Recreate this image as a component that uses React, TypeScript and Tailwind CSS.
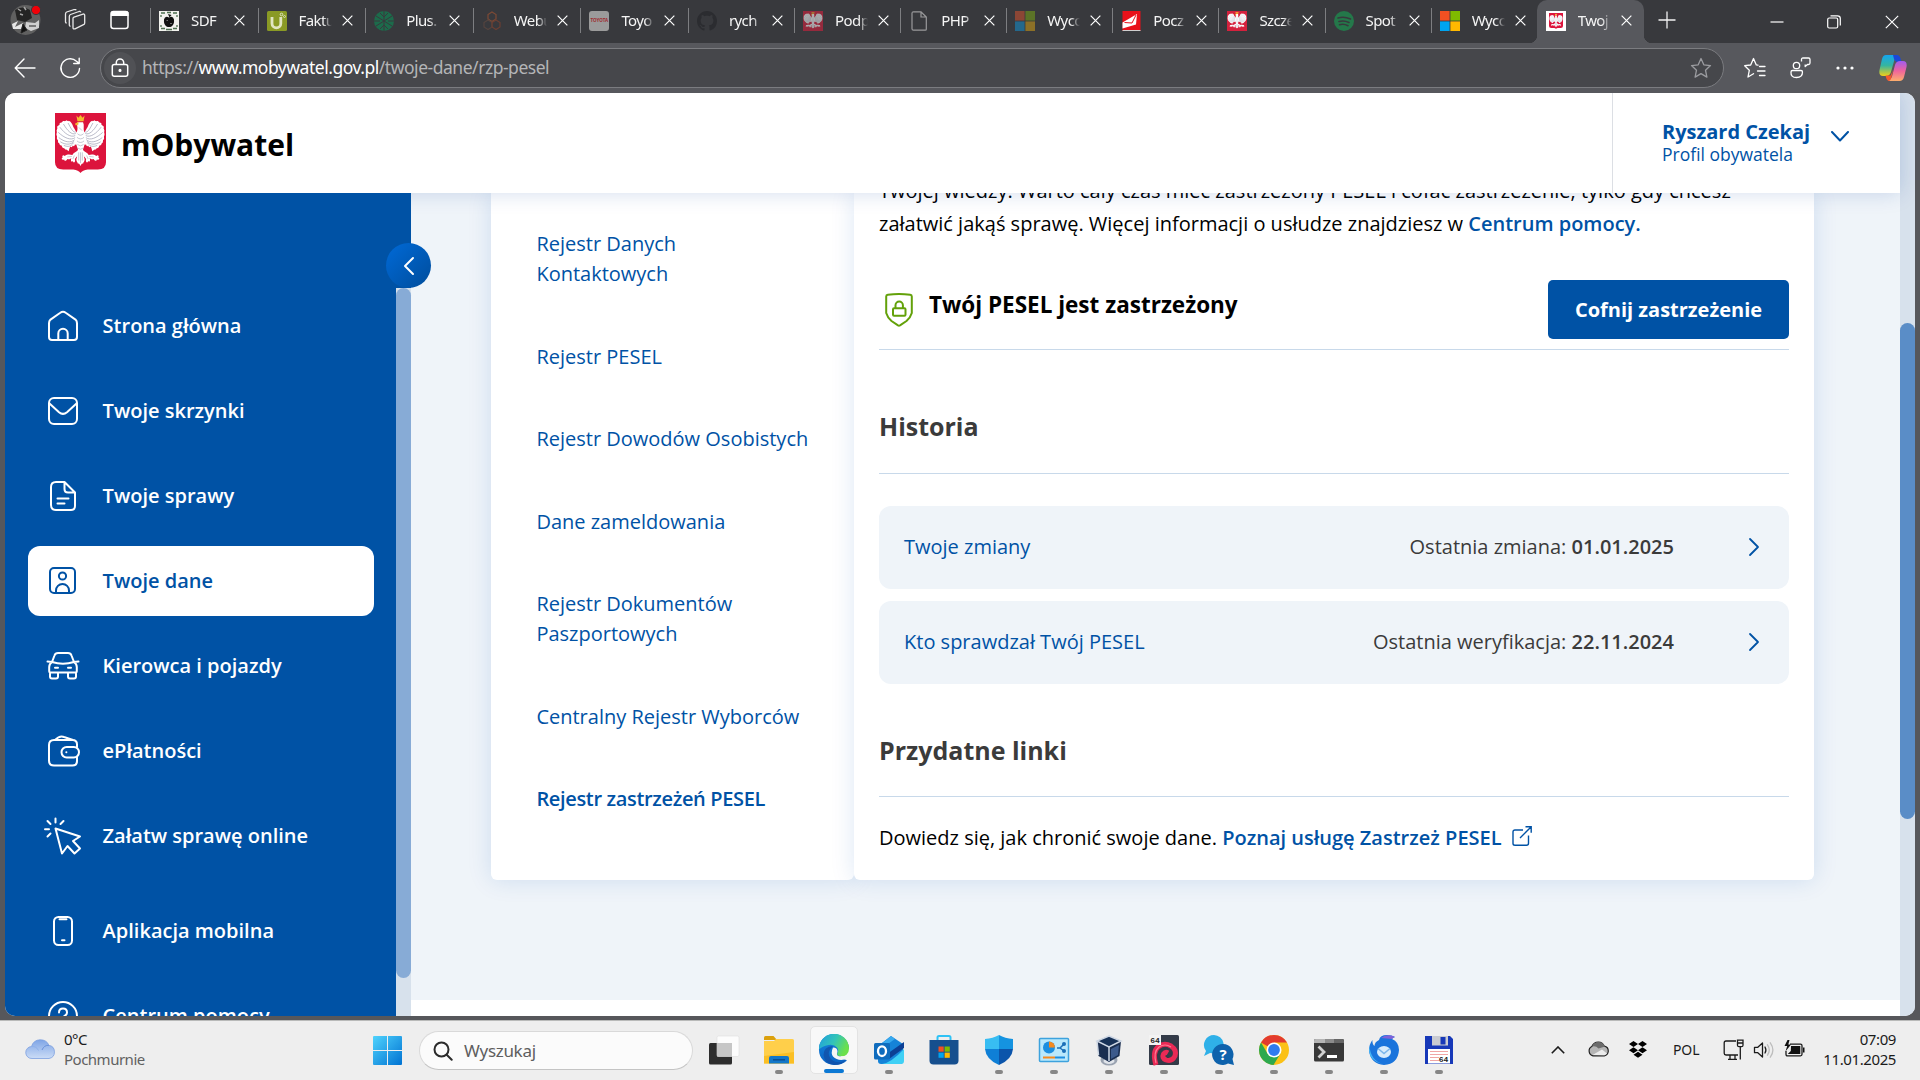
import React from "react";

const UI = "font-['Open_Sans',sans-serif]";
const SYS = "font-['Noto_Sans','Open_Sans',sans-serif]";

/* ---------- emblem ---------- */

function EagleHalf() {
  return (
    <g>
      <path
        d="M46 40 C41 38 39 31 36 27 C34 21 31 16 27 15 C26 17 24 15 22 14 C21 17 18 15 15 16 C15 19 11 18 9 20 C10 24 6 24 4 27 C6 30 3 32 3 35 C5 37 2 40 3 43 C5 44 3 48 4 51 C7 51 5 55 7 58 C9 57 8 61 11 63 C13 61 13 66 16 68 C18 66 19 70 21 71 C22 69 25 73 27 74 C28 69 29 66 31 65 C33 68 34 65 35 63 C37 66 39 63 39 61 C42 62 44 60 46 58 Z"
        fill="#fff"
      />
      <g stroke="#8f90a6" strokeWidth="1.2" fill="none" strokeLinecap="round">
        <path d="M40 37 C35 38 31 29 26 20" />
        <path d="M40 40 C33 43 24 34 17 22" />
        <path d="M39 44 C31 48 19 40 10 28" />
        <path d="M39 48 C31 54 18 48 7 38" />
        <path d="M38 52 C31 59 18 56 8 48" />
        <path d="M37 55 C31 62 21 62 11 56" />
        <path d="M36 58 C31 65 26 66 18 63" />
      </g>
      <path
        d="M45 72 C41 76 36 77 34 81 C30 80 24 79 19 83 C16 80 13 83 15 86 C11 88 14 92 18 90 C18 94 23 93 24 89 C28 90 30 89 32 87 C30 92 32 96 35 93 C36 98 41 95 39 89 C42 85 45 82 47 79 Z"
        fill="#fff"
      />
      <path d="M24 85 L33 84 M35 89 L38 82" stroke="#a9a9b8" strokeWidth="1.1" />
    </g>
  );
}

function Emblem({ className, square = false }: { className: string; square?: boolean }) {
  return (
    <svg viewBox="0 0 100 116" preserveAspectRatio="none" className={className}>
      {square ? (
        <rect width="100" height="116" fill="#d4213d" />
      ) : (
        <path d="M0 0 H100 V95 Q100 109 84 109 H64 Q54 110 50 116 Q46 110 36 109 H16 Q0 109 0 95 Z" fill="#dc143c" />
      )}
      <EagleHalf />
      <g transform="translate(100 0) scale(-1 1)">
        <EagleHalf />
      </g>
      <path d="M44 18 C42 25 46 29 43 36 C39 44 40 60 45 70 L43 86 C40 92 44 94 45 98 C48 97 49 101 50 103 C51 101 52 97 55 98 C56 94 60 92 57 86 L55 70 C60 60 61 44 57 36 C55 30 58 24 55 18 Z" fill="#fff" />
      <g stroke="#9c9db0" strokeWidth="1.1" fill="none">
        <path d="M44 40 Q50 46 56 40 M43 47 Q50 53 57 47 M43 54 Q50 60 57 54 M44 61 Q50 66 56 61 M45 68 Q50 72 55 68 M46.500 76 V92 M50 76 V97 M53.500 76 V92 M47 28 L53 34" />
      </g>
      <path d="M42 5 L46 9 L50 4 L54 9 L58 5 L56 16 H44 Z" fill="#f5b82e" />
      <path d="M46 17 L39 21 L41 24 L46 22 Z" fill="#f5b82e" />
    </svg>
  );
}

/* ---------- tab favicons ---------- */

const MsSquares = ({ dim = false }: { dim?: boolean }) => (
  <svg viewBox="0 0 20 20" className="size-5">
    <rect width="9.6" height="9.6" fill={dim ? "#8b4635" : "#f25022"} />
    <rect x="10.4" width="9.6" height="9.6" fill={dim ? "#5b7327" : "#7fba00"} />
    <rect y="10.4" width="9.6" height="9.6" fill={dim ? "#24688c" : "#00a4ef"} />
    <rect x="10.4" y="10.4" width="9.6" height="9.6" fill={dim ? "#8c7027" : "#ffb900"} />
  </svg>
);

const Favicon = {
  sdf: (
    <svg viewBox="0 0 20 20" className="size-5">
      <rect width="20" height="20" fill="#f2f2ee" />
      <path d="M2 2h4M8 1.5h4M14 2h4M2 17.5h4M7 18.5h6M14 17.5h4M2 4v2M18 4v2M2 14v2M18 14v2" stroke="#4d7050" strokeWidth="1.3" />
      <path d="M10 6.500q4-2 5 2 .5 5-2.500 7-2.500 1-5 0-3-2-2.500-7 1-4 5-2z" fill="#111" />
      <path d="M9 3l3.500 1-2 2.500" fill="#111" />
      <path d="M7.500 9.500h1.500M11 12.500h2" stroke="#999" strokeWidth=".7" />
    </svg>
  ),
  fakt: (
    <svg viewBox="0 0 20 20" className="size-5">
      <rect width="20" height="20" rx="1.500" fill="#8a9a25" />
      <path d="M5 6v6.500a4.400 4.400 0 0 0 8.800 0V6" fill="none" stroke="#e1e5c3" strokeWidth="2.800" />
      <circle cx="14.500" cy="3.500" r="1.300" fill="none" stroke="#e1e5c3" />
      <circle cx="17.500" cy="5.500" r="1" fill="none" stroke="#e1e5c3" strokeWidth=".8" />
    </svg>
  ),
  plus: (
    <svg viewBox="0 0 20 20" className="size-5">
      <circle cx="10" cy="10" r="10" fill="#1c6b4b" />
      <path d="M10 0v20M2 5l8 5 8-5M2 15l8-5 8 5M6 2l4 4 4-4M6 18l4-4 4 4M0 10h6M14 10h6" stroke="#38393d" strokeWidth="1" fill="none" />
    </svg>
  ),
  web: (
    <svg viewBox="0 0 20 20" className="size-5" fill="none" strokeWidth="1.200">
      <path d="M10 1l4 2.500v4.500l-4 2.500-4-2.500V3.500z" stroke="#7d4a35" />
      <path d="M6 9l4 2.500V16l-4 2.500L2 16v-4.500z" stroke="#54443f" />
      <path d="M14 9l4 2.500V16l-4 2.500-4-2.500v-4.500z" stroke="#6b3f33" />
    </svg>
  ),
  toyo: (
    <div className="flex size-5 items-center justify-center rounded-[3px] bg-[#9b9b9b] text-[4.5px] font-bold text-[#9e2a30]">TOYOTA</div>
  ),
  github: (
    <svg viewBox="0 0 16 16" className="size-5" fill="#2b2c30">
      <path d="M8 0C3.580 0 0 3.580 0 8c0 3.540 2.290 6.530 5.470 7.590.4.070.55-.17.55-.38 0-.19-.01-.82-.01-1.490-2.010.37-2.530-.49-2.690-.94-.09-.23-.48-.94-.82-1.130-.28-.15-.68-.52-.01-.53.63-.01 1.080.58 1.230.82.72 1.210 1.870.87 2.330.66.07-.52.28-.87.51-1.070-1.780-.2-3.640-.89-3.640-3.950 0-.87.31-1.590.82-2.150-.08-.2-.36-1.020.08-2.120 0 0 .67-.21 2.200.82.64-.18 1.320-.27 2-.27s1.360.09 2 .27c1.530-1.040 2.200-.82 2.200-.82.44 1.100.16 1.920.08 2.120.51.56.82 1.270.82 2.150 0 3.070-1.870 3.750-3.650 3.950.29.25.54.73.54 1.480 0 1.070-.01 1.930-.01 2.200 0 .21.15.46.55.38A8.010 8.010 0 0 0 16 8c0-4.420-3.580-8-8-8" />
    </svg>
  ),
  eagleDim: (
    <div className="size-5 opacity-60">
      <Emblem square className="size-5" />
    </div>
  ),
  page: (
    <svg viewBox="0 0 20 20" className="size-5" fill="none" stroke="#9a9a9c" strokeWidth="1.200">
      <path d="M4.500.8H12L17.300 6v12.200q0 1-1 1H4.500q-1.500 0-1.500-1.500V2.300Q3 .8 4.500.8ZM12 .8V6h5.300" />
    </svg>
  ),
  msDim: <MsSquares dim />,
  pocz: (
    <svg viewBox="0 0 20 20" className="size-5">
      <rect x="1.500" width="18" height="20" fill="#e8111a" />
      <path d="M1.500 11.500L16 3l-1 10.500-13.500 4z" fill="#fff" />
      <path d="M3.500 11.500l7.500.5 4-8" fill="none" stroke="#e8111a" />
      <path d="M1.500 19.500h18" stroke="#cfcfcf" />
    </svg>
  ),
  eagle: <Emblem square className="size-5" />,
  spot: (
    <svg viewBox="0 0 20 20" className="size-5">
      <circle cx="10" cy="10" r="10" fill="#24784a" />
      <path d="M4 7q6-2 12.500 1M5 10.500q5-1.500 10 1M5.500 13.700q4.500-1.200 8.500 1" fill="none" stroke="#38393d" strokeWidth="1.600" strokeLinecap="round" />
    </svg>
  ),
  ms: <MsSquares />,
};

const tabs: { label: string; icon: React.ReactNode; wide?: boolean }[] = [
  { label: "SDF", icon: Favicon.sdf, wide: true },
  { label: "Faktu", icon: Favicon.fakt, wide: true },
  { label: "Plus.", icon: Favicon.plus, wide: true },
  { label: "Webu", icon: Favicon.web, wide: true },
  { label: "Toyo", icon: Favicon.toyo, wide: true },
  { label: "rych", icon: Favicon.github },
  { label: "Podp", icon: Favicon.eagleDim },
  { label: "PHP", icon: Favicon.page },
  { label: "Wyco", icon: Favicon.msDim },
  { label: "Pocz", icon: Favicon.pocz },
  { label: "Szcze", icon: Favicon.eagle },
  { label: "Spot", icon: Favicon.spot },
  { label: "Wyco", icon: Favicon.ms },
];

const Cross = ({ s = 12, w = 1.3 }: { s?: number; w?: number }) => (
  <svg width={s} height={s} viewBox="0 0 12 12" className="shrink-0">
    <path d="M.7.7l10.600 10.600M11.300.7L.7 11.300" stroke="#fff" strokeWidth={w} fill="none" />
  </svg>
);

function TabBody({ label, icon, sep = true }: { label: string; icon: React.ReactNode; sep?: boolean }) {
  return (
    <>
      <span className={sep ? "h-[25px] w-px bg-[#7d7e81]" : "h-[25px] w-px"} />
      <span className="ml-2 flex size-5 shrink-0">{icon}</span>
      <span className="mt-[-2px] ml-3 w-[33px] shrink-0 text-[15px] leading-5 tracking-[-0.6px] whitespace-nowrap text-[#f5f5f5] [mask-image:linear-gradient(to_right,#000_72%,transparent)]">
        {label}
      </span>
      <span className="ml-[10px] flex">
        <Cross s={11} />
      </span>
    </>
  );
}

function TabStrip() {
  return (
    <div className="flex h-[43px] bg-[#38393d]">
      <div className="flex w-[150px] shrink-0 items-center pb-[3px]">
        <svg viewBox="0 0 32 32" className="ml-[9px] size-8">
          <circle cx="16.500" cy="16" r="15" fill="#606060" />
          <path d="M6 6q8-5 15 0l2 8-7 4-8-2z" fill="#242424" />
          <path d="M9 5l3 2M15 3l2 3M11 10l3 1" stroke="#a5a5a5" strokeWidth="1.500" />
          <path d="M3 20l6-3-3 6 8-4-2 6H4z" fill="#e6e6e6" />
          <path d="M17 18l9 1 4-3v8l-8 3-6-3z" fill="#cfcfcf" />
          <path d="M14 20l4 6-6 3zM20 22h7" fill="#111" stroke="#222" />
          <circle cx="27" cy="6" r="4.600" fill="#f00008" stroke="#38393d" />
        </svg>
        <svg viewBox="0 0 22 22" className="ml-[23px] size-[22px]" fill="none" stroke="#e8e8e8" strokeWidth="1.300" strokeLinejoin="round">
          <path d="M9 9.500q0-1 1-1.400l9-3q1.700-.4 1.700 1.200V14q0 1.200-1.200 1.700L11 19.800q-2 .6-2-1z" />
          <path d="M5.300 16V7.500Q5.300 6 6.500 5.500l8.500-3q1.500-.4 1.800.8M1.500 13V5Q1.500 3.600 2.700 3l7.800-2.500q1.300-.3 1.600.7" />
          <path d="M1.500 13q0 1 1.200 1.200M5.300 16q0 1 1.200 1.300" />
        </svg>
        <svg viewBox="0 0 20 20" className="ml-[24px] size-5">
          <rect x="1" y="1.600" width="17" height="16.800" rx="2.500" fill="none" stroke="#fff" strokeWidth="1.500" />
          <path d="M1 2.500Q1.500 1 3 1h13.500Q18 1 18.500 2.500V6H1z" fill="#fff" />
        </svg>
      </div>
      {tabs.map((t, i) => (
        <div key={i} className={t.wide ? "flex w-[107.6px] shrink-0 items-center pb-[2px]" : "flex w-[106.1px] shrink-0 items-center pb-[2px]"}>
          <TabBody label={t.label} icon={t.icon} />
        </div>
      ))}
      <div className="relative flex h-[43px] w-[107px] shrink-0 items-center rounded-t-[10px] bg-[#57585d] pb-[2px]">
        <TabBody
          sep={false}
          label="Twoj"
          icon={
            <span className="flex size-5 items-center justify-center bg-white">
              <Emblem className="h-4 w-[14px]" />
            </span>
          }
        />
        <span className="absolute bottom-0 -left-2 size-2 bg-[radial-gradient(circle_at_0_0,#38393d_8px,#57585d_8.5px)]" />
        <span className="absolute -right-2 bottom-0 size-2 bg-[radial-gradient(circle_at_100%_0,#38393d_8px,#57585d_8.5px)]" />
      </div>
      <div className="flex flex-1 items-center pb-1">
        <svg viewBox="0 0 18 18" className="ml-[14px] size-[18px]" stroke="#f2f2f2" strokeWidth="1.300">
          <path d="M9 .5v17M.5 9h17" />
        </svg>
        <svg viewBox="0 0 14 14" className="mt-[5px] ml-[94px] size-[14px]" stroke="#fff" strokeWidth="1.200">
          <path d="M.5 7h13" />
        </svg>
        <svg viewBox="0 0 14 14" className="mt-[5px] ml-[43px] size-[14px]" fill="none" stroke="#fff" strokeWidth="1.200">
          <rect x=".7" y="3" width="10" height="10" rx="1.500" />
          <path d="M3.500.8h7Q13.300.8 13.300 3.500V10.500" />
        </svg>
        <span className="mt-[5px] ml-[44px] flex">
          <Cross s={14} w={1} />
        </span>
      </div>
    </div>
  );
}

function Toolbar() {
  return (
    <div className="flex h-[50px] items-start bg-[#57585d] pt-[5px]">
      <svg viewBox="0 0 22 22" className="mt-[9px] ml-[14px] size-[22px]" fill="none" stroke="#fff" strokeWidth="1.400" strokeLinecap="round" strokeLinejoin="round">
        <path d="M21 11H1.500M10 2L1.200 11l8.800 9" />
      </svg>
      <svg viewBox="0 0 22 22" className="mt-[9px] ml-[23px] size-[22px]" fill="none" stroke="#fff" strokeWidth="1.400" strokeLinecap="round" strokeLinejoin="round">
        <path d="M20.500 11.500a9.300 9.300 0 1 1-3-7.300L20 6.300M20.200 1.300v5.200h-5.500" />
      </svg>
      <div className="ml-[19px] flex h-10 w-[1624px] items-center rounded-full border border-[#7b7c80] bg-[#46474b]">
        <span className="ml-[3px] flex size-8 items-center justify-center rounded-full bg-[#505155]">
          <svg viewBox="0 0 18 20" className="h-5 w-[18px]" fill="none" stroke="#fff" strokeWidth="1.500">
            <rect x="1.300" y="6.500" width="15.400" height="11.800" rx="2" />
            <path d="M5.300 6.500V4.600a3.700 3.700 0 0 1 7.400 0v1.900" />
            <circle cx="9" cy="12.400" r=".8" fill="#fff" />
          </svg>
        </span>
        <span className="-mt-[3px] ml-[6px] text-[17.500px] leading-6 tracking-[-0.47px] whitespace-nowrap text-[#b4b5b7]">
          https://<span className="text-white">www.mobywatel.gov.pl</span>/twoje-dane/rzp-pesel
        </span>
        <svg viewBox="0 0 22 22" className="mr-[11px] ml-auto size-[22px]" fill="none" stroke="#9b9ca0" strokeWidth="1.300" strokeLinejoin="round">
          <path d="M11 1.500l2.800 6.300 6.700.8-5 4.600 1.400 6.900-5.900-3.500-5.900 3.500 1.400-6.900-5-4.600 6.700-.8z" />
        </svg>
      </div>
      <svg viewBox="0 0 22 22" className="mt-[9px] ml-[20px] size-[22px]" fill="none" stroke="#fff" strokeWidth="1.300" strokeLinejoin="round" strokeLinecap="round">
        <path d="M14 8.200l-1.700-.3L9.500 1.500 6.700 8l-6 .7 4.600 4.600L4 20l5.500-3.300M15.500 9.500H21M13.500 14H21M15.500 18.500H21" />
      </svg>
      <svg viewBox="0 0 22 22" className="mt-[9px] ml-[23px] size-[22px]" fill="none" stroke="#fff" strokeWidth="1.300" strokeLinejoin="round">
        <circle cx="7.500" cy="8.500" r="3.200" />
        <path d="M3.500 13.500h8.500q1.500 0 1.500 1.500 0 5.500-6 5.500t-5.500-5.500q0-1.500 1.500-1.500zM12.500 4.500V2.500Q12.500 1 14 1h5.500Q21 1 21 2.500V6q0 1.500-1.500 1.500h-1l-2.300 2V7.400" />
      </svg>
      <svg viewBox="0 0 18 4" className="mt-[18px] ml-[25px] h-1 w-[18px]" fill="#fff">
        <circle cx="2" cy="2" r="1.600" />
        <circle cx="9" cy="2" r="1.600" />
        <circle cx="16" cy="2" r="1.600" />
      </svg>
      <svg viewBox="0 0 28 28" className="mt-[6px] ml-[25px] size-7">
        <defs>
          <linearGradient id="cpA" x1="0" y1="0" x2="0" y2="1">
            <stop offset="0" stopColor="#14a5f0" />
            <stop offset=".5" stopColor="#35b5a0" />
            <stop offset="1" stopColor="#f0cf18" />
          </linearGradient>
          <linearGradient id="cpB" x1="0" y1="0" x2="0" y2="1">
            <stop offset="0" stopColor="#a05cf0" />
            <stop offset=".5" stopColor="#f0649c" />
            <stop offset="1" stopColor="#fdae6c" />
          </linearGradient>
        </defs>
        <path d="M7 1h12q-2.500 1-3.500 4.500L12 18q-1.200 4-5 4H4q-4.500 0-3.500-6L3 5q1-4 4-4z" fill="url(#cpA)" />
        <path d="M14 1h4q2.500 0 3.500 3.500L22.500 8H18q-2 0-3-3z" fill="#1b48d8" />
        <path d="M21 7h3q4.500 0 3.500 6L25 23q-1 4-4.500 4H9q3-1 4-4.500L16 11q1.200-4 5-4z" fill="url(#cpB)" />
        <path d="M6.500 21.500h5L14 16l-1.500 7Q11.500 27 9.500 27 7.500 26 6.500 21.500z" fill="#f4572e" />
      </svg>
    </div>
  );
}

/* ---------- sidebar ---------- */

const ic = "size-[38px] shrink-0 fill-none stroke-current stroke-2 [stroke-linecap:round] [stroke-linejoin:round]";

const SideIcon = {
  home: (
    <svg viewBox="0 0 38 38" className={ic}>
      <path d="M5 16.200Q5 14 6.500 12.600L16.300 5.800Q19 3.800 21.700 5.800L31.500 12.600Q33 14 33 16.200V30Q33 33 30 33H8Q5 33 5 30zM14.300 33v-6.500a4.700 4.700 0 0 1 9.400 0V33" />
    </svg>
  ),
  mail: (
    <svg viewBox="0 0 38 38" className={ic}>
      <rect x="5" y="6" width="28" height="26" rx="5" />
      <path d="M5.500 11.500L15 20.200Q19 23.600 23 20.200l9.500-8.700" />
    </svg>
  ),
  doc: (
    <svg viewBox="0 0 38 38" className={ic}>
      <path d="M12 5h8.500L31 15.500V29q0 4-4 4H12q-5 0-5-5V10q0-5 5-5zM20.500 5v7q0 3.500 3.500 3.500h7M13.500 21.500h11M13.500 26.500h7" />
    </svg>
  ),
  user: (
    <svg viewBox="0 0 38 38" className={ic}>
      <rect x="6" y="6" width="25" height="25" rx="4" />
      <circle cx="18.500" cy="14" r="3.600" />
      <path d="M12 31v-2.500a6.500 6.500 0 0 1 13 0V31" />
    </svg>
  ),
  car: (
    <svg viewBox="0 0 38 38" className={ic}>
      <path d="M8 15L10.500 8.500Q11.300 6 14 6h10q2.700 0 3.500 2.500L30 15M3.500 14.500L8 15q11 3.500 22 0l4.500-.5M8 15q-2.800 2-2.800 5v4q0 1.500 1.500 1.500h24.600q1.500 0 1.500-1.500v-4q0-3-2.800-5M11 20.800h3M24 20.800h3M6 25.500v4q0 2 2 2h4q2 0 2-2v-4M24 25.500v4q0 2 2 2h4q2 0 2-2v-4" />
    </svg>
  ),
  wallet: (
    <svg viewBox="0 0 38 38" className={ic}>
      <path d="M33 15v-2.500Q33 8 28.500 8H10q-5 0-5 5v15.500Q5 33.500 10 33.500h18.500Q33 33.500 33 29v-3.500M11 8q5-5 9-3l9 3" />
      <rect x="17.500" y="15" width="17.500" height="10.500" rx="5.200" />
      <path d="M22.300 20.200h.1" />
    </svg>
  ),
  click: (
    <svg viewBox="0 0 38 38" className={ic}>
      <path d="M11.500 11.500l6.500 25 5.500-7.500 7 7.500 5.500-5-7-7.500 7-4.500zM11.500 1.500v4M3.500 4l3 3M19.500 4l-3 3M1 12.200h4M3.500 19.500l3-3" />
    </svg>
  ),
  phone: (
    <svg viewBox="0 0 38 38" className={ic}>
      <rect x="10" y="5" width="18" height="28" rx="4.500" />
      <path d="M15.500 7.200h7M18 28.200h2.500" />
    </svg>
  ),
  help: (
    <svg viewBox="0 0 38 38" className={ic}>
      <circle cx="19" cy="19" r="14" />
      <path d="M15 15.500q0-4 4-4t4 4q0 2-2 3.200-2 1.300-2 3.300M19 26h.1" />
    </svg>
  ),
};

const sideItems = [
  { label: "Strona główna", icon: SideIcon.home },
  { label: "Twoje skrzynki", icon: SideIcon.mail },
  { label: "Twoje sprawy", icon: SideIcon.doc },
  { label: "Twoje dane", icon: SideIcon.user, active: true },
  { label: "Kierowca i pojazdy", icon: SideIcon.car },
  { label: "ePłatności", icon: SideIcon.wallet },
  { label: "Załatw sprawę online", icon: SideIcon.click },
  { label: "Aplikacja mobilna", icon: SideIcon.phone, spaced: true },
  { label: "Centrum pomocy", icon: SideIcon.help },
];

function Sidebar() {
  return (
    <aside className="relative z-20 flex w-[406px] shrink-0 bg-[#0052a5]">
      <nav className="flex w-[391px] flex-col gap-[15px] overflow-hidden pt-[98px] pl-[23px]">
        {sideItems.map((it) => (
          <div
            key={it.label}
            className={
              (it.active ? "bg-white text-[#0052a5] " : "text-white ") +
              (it.spaced ? "mt-[10px] " : "") +
              "flex h-[70px] w-[346px] shrink-0 items-center rounded-xl pl-4 text-[20px] font-semibold"
            }
          >
            {it.icon}
            <span className="ml-[20.6px] whitespace-nowrap">{it.label}</span>
          </div>
        ))}
      </nav>
      <div className="mt-[95px] w-[15px] bg-[#d7e1ec]">
        <div className="h-[690px] rounded-full bg-[#87abd6]" />
      </div>
      <button className="absolute top-[50px] -right-5 flex size-[45px] items-center justify-center rounded-full bg-linear-to-br from-[#006ad8] to-[#004d9c]">
        <svg viewBox="0 0 12 20" className="ml-[1px] h-5 w-3" fill="none" stroke="#fff" strokeWidth="2" strokeLinecap="round" strokeLinejoin="round">
          <path d="M10 2L2 10l8 8" />
        </svg>
      </button>
    </aside>
  );
}

/* ---------- content ---------- */

const registers = [
  "Rejestr Danych Kontaktowych",
  "Rejestr PESEL",
  "Rejestr Dowodów Osobistych",
  "Dane zameldowania",
  "Rejestr Dokumentów Paszportowych",
  "Centralny Rejestr Wyborców",
];

function HistoryRow({ title, label, date }: { title: string; label: string; date: string }) {
  return (
    <div className="flex h-[83px] items-center rounded-xl bg-[#eff4f9] pr-[29px] pl-[25px] text-[20px]">
      <span className="-mt-[2px] text-[#0052a5]">{title}</span>
      <span className="-mt-[2px] ml-auto text-[#3b3b3b]">
        {label} <span className="font-semibold">{date}</span>
      </span>
      <svg viewBox="0 0 12 20" className="-mt-[2px] ml-[74px] h-5 w-3" fill="none" stroke="#0052a5" strokeWidth="1.800" strokeLinecap="round" strokeLinejoin="round">
        <path d="M2 2l8 8-8 8" />
      </svg>
    </div>
  );
}

function Content() {
  return (
    <main className="flex flex-1 flex-col overflow-hidden bg-white">
      <div className="h-[807px] overflow-hidden bg-[#eff4f9] pl-[80px]">
        <div className="flex h-[687px] w-[1323px]">
          <section className="flex w-[363px] shrink-0 flex-col gap-[52.5px] rounded-b-md bg-white pt-[36px] pl-[45.4px] text-[20px] leading-[30px] text-[#0052a5] shadow-[0_0_25px_rgba(0,82,185,0.14)]">
            {registers.map((r) => (
              <div key={r} className="w-[280px]">
                {r.includes("Kontaktowych") ? (
                  <>
                    Rejestr Danych
                    <br />
                    Kontaktowych
                  </>
                ) : (
                  r
                )}
              </div>
            ))}
            <div className="font-semibold tracking-[-0.34px]">Rejestr zastrzeżeń PESEL</div>
          </section>
          <section className="flex flex-1 flex-col rounded-b-md bg-white pr-[25px] pl-[25px] text-[20px] shadow-[0_0_25px_rgba(0,82,185,0.14)]">
            <p className="-mt-[19px] leading-[33px] whitespace-nowrap text-black">
              Twojej wiedzy. Warto cały czas mieć zastrzeżony PESEL i cofać zastrzeżenie, tylko gdy chcesz
              <br />
              załatwić jakąś sprawę. Więcej informacji o usłudze znajdziesz w{" "}
              <span className="font-semibold text-[#0052a5]">Centrum pomocy.</span>
            </p>
            <div className="mt-10 flex h-[70px] items-start border-b border-[#c8d9ea]">
              <svg viewBox="0 0 28 34" className="mt-[13px] ml-[6px] h-[34px] w-7" fill="none" stroke="#63a10a" strokeWidth="2" strokeLinejoin="round">
                <path d="M1.200 3.500Q1.200 2 2.800 1.800 14 .4 25.200 1.800q1.600.2 1.600 1.700V20Q25.500 24.500 21.500 28L15 32.400q-1 .6-2 0L6.500 28Q2.500 24.500 1.200 20z" />
                <rect x="8" y="15.300" width="12.500" height="7.500" rx="1" />
                <path d="M10.500 15.300v-3a3.700 3.700 0 0 1 7.400 0v3" />
              </svg>
              <h2 className="mt-[9px] ml-4 text-[22.500px] leading-8 font-bold text-black">Twój PESEL jest zastrzeżony</h2>
              <button className="ml-auto h-[59px] w-[241px] rounded-[5px] bg-[#0052a5] font-bold text-white">Cofnij zastrzeżenie</button>
            </div>
            <h3 className="mt-[56px] h-[68px] border-b border-[#c8d9ea] text-[25px] leading-10 font-bold text-[#3b3b3b]">Historia</h3>
            <div className="mt-8 flex flex-col gap-3">
              <HistoryRow title="Twoje zmiany" label="Ostatnia zmiana:" date="01.01.2025" />
              <HistoryRow title="Kto sprawdzał Twój PESEL" label="Ostatnia weryfikacja:" date="22.11.2024" />
            </div>
            <h3 className="mt-[46px] h-[67px] border-b border-[#c8d9ea] text-[25px] leading-10 font-bold text-[#3b3b3b]">Przydatne linki</h3>
            <p className="mt-[26px] flex items-center leading-[30px] whitespace-pre text-black">
              Dowiedz się, jak chronić swoje dane. <span className="font-semibold text-[#0052a5]">Poznaj usługę Zastrzeż PESEL</span>
              <svg viewBox="0 0 20 20" className="-mt-[5px] ml-[10px] size-5" fill="none" stroke="#0052a5" strokeWidth="1.400">
                <path d="M11 4H3Q1 4 1 6v11.500Q1 19.300 3 19.300h11.500q2 0 2-2V9.500M8 12L19 1M13.500.8h5.700v6" />
              </svg>
            </p>
          </section>
        </div>
      </div>
    </main>
  );
}

/* ---------- taskbar ---------- */

const AppIcon = {
  view: (
    <svg viewBox="0 0 32 32" className="size-8">
      <rect x="1" y="9" width="23" height="21.500" rx="1.500" fill="#2d2d2d" />
      <rect x="9" y="2" width="22" height="20.500" rx="1.500" fill="#fff" fillOpacity=".82" stroke="#ddd" strokeWidth=".6" />
      <rect x="9" y="9" width="15" height="13.500" fill="#c6c6c6" />
    </svg>
  ),
  folder: (
    <svg viewBox="0 0 32 32" className="size-8">
      <path d="M1 3.500Q1 2 2.500 2h8L14 6H1z" fill="#dba00c" />
      <path d="M1 7h10l2-2h16.500Q31 5 31 6.500v23H1z" fill="#ffcf4a" />
      <path d="M1 22v7.500h30V18z" fill="#fbbf24" />
      <path d="M6 29.500V24q0-2 2-2h16q2 0 2 2v5.500z" fill="#1277c9" />
      <path d="M10 25.800h12" stroke="#0b4f92" strokeWidth="1.500" />
    </svg>
  ),
  edge: (
    <svg viewBox="0 0 32 32" className="size-8">
      <defs>
        <linearGradient id="egA" x1="0" y1="0" x2="1" y2="0.4">
          <stop offset="0" stopColor="#1f9de0" />
          <stop offset=".55" stopColor="#33c4b8" />
          <stop offset="1" stopColor="#6be04c" />
        </linearGradient>
        <linearGradient id="egB" x1="0" y1="0" x2="0" y2="1">
          <stop offset="0" stopColor="#1487dd" />
          <stop offset="1" stopColor="#0b62c4" />
        </linearGradient>
      </defs>
      <path d="M1 16a15 15 0 0 1 30-2L22 23l7 3.500Q24 31 16 31A15 15 0 0 1 1 16z" fill="url(#egB)" />
      <path d="M1 15.500A15 15 0 0 1 31 14q.3 4.500-2.500 6.800-3 2.200-7.500 1.200-2.600-.7-1.600-2.700Q21 16 19 13.500 16 10 10.500 11 4 12 1 15.500z" fill="url(#egA)" />
      <path d="M13.500 14Q10 17 11 21.500 13 28 20.500 28.200q4.500 0 7.800-2.700Q24 31 16.500 31 6.500 30 5.500 21 5.500 12.500 15 12z" fill="#1150a8" opacity=".8" />
      <path d="M15 13.500q4.500 0 4.500 4-.8 2-.5 3.500.8 1.200 3.500 1.500 5 .5 7.500-1.500-1 4-3.500 4.500-7 1.500-11.500-3-2.500-3.500 0-9z" fill="#f5f5f5" />
    </svg>
  ),
  outlook: (
    <svg viewBox="0 0 32 32" className="size-8">
      <path d="M5 12L18 2l12 8v17q0 3-3 3H8q-3 0-3-3z" fill="#1583d8" />
      <path d="M8 10L18 2l4 3-13 9z" fill="#38a9ee" />
      <path d="M14 20l17-12v6L16 25z" fill="#0c3f94" />
      <path d="M31 15v12q0 3-3 3H9q9-1 22-15z" fill="#3fd0f5" />
      <rect x="1" y="9" width="16" height="16.500" rx="1.500" fill="#0f6cbd" />
      <ellipse cx="9" cy="17.200" rx="4" ry="4.800" fill="none" stroke="#fff" strokeWidth="2.300" />
    </svg>
  ),
  store: (
    <svg viewBox="0 0 32 32" className="size-8">
      <path d="M9.500 9V3.500Q9.500 2 11 2h10q1.500 0 1.500 1.500V9" fill="none" stroke="#2fc2f5" strokeWidth="2" />
      <path d="M1.500 6h29v20.500q0 4-4 4h-21q-4 0-4-4z" fill="#164f8e" />
      <rect x="10.500" y="12.500" width="5.200" height="5.200" fill="#f25022" />
      <rect x="16.600" y="12.500" width="5.200" height="5.200" fill="#7fba00" />
      <rect x="10.500" y="18.600" width="5.200" height="5.200" fill="#00a4ef" />
      <rect x="16.600" y="18.600" width="5.200" height="5.200" fill="#ffb900" />
    </svg>
  ),
  shield: (
    <svg viewBox="0 0 32 32" className="size-8">
      <path d="M16 1Q10 4.500 2 5v10h14z" fill="#38bdf2" />
      <path d="M16 1q6 3.500 14 4v10H16z" fill="#1593e0" />
      <path d="M2 15q1 10.500 14 16V15z" fill="#0f7fd6" />
      <path d="M30 15q-1 10.500-14 16V15z" fill="#0b55ab" />
    </svg>
  ),
  panel: (
    <svg viewBox="0 0 32 32" className="size-8">
      <rect x="1.500" y="4.500" width="29" height="23" rx="1" fill="#b9e8fb" stroke="#3da2dd" strokeWidth="1.500" />
      <circle cx="11" cy="13.500" r="6" fill="#1c8fe0" />
      <path d="M11 13.500V7.500a6 6 0 0 1 6 6z" fill="#f58a1f" />
      <path d="M19 14h3l4-4M22 14l4 3" stroke="#1c6fb8" strokeWidth="1.500" fill="none" />
      <circle cx="26" cy="10" r="2" fill="#1c6fb8" />
      <circle cx="26" cy="17" r="2" fill="#1c6fb8" />
      <path d="M5 23.500h12" stroke="#f58a1f" strokeWidth="2" />
      <path d="M17 23.500h10" stroke="#1c8fe0" strokeWidth="2" />
    </svg>
  ),
  vbox: (
    <svg viewBox="0 0 32 32" className="size-8">
      <ellipse cx="16" cy="26" rx="8.500" ry="5.500" fill="#9aa3b1" />
      <ellipse cx="16" cy="27" rx="5.500" ry="3" fill="#e0e4ea" />
      <path d="M16 2l12 5-1.500 15L16 28 5.500 22 4 7z" fill="#1a2e50" />
      <path d="M16 2l12 5-12 6L4 7z" fill="#173157" stroke="#ced7e4" strokeWidth="1.500" />
      <path d="M16 13v14M4 7l1.500 14" fill="none" stroke="#ced7e4" strokeWidth="1.500" />
      <path d="M18 15l8-4-1 10-7 4z" fill="#3c5a8c" />
    </svg>
  ),
  swirl: (
    <svg viewBox="0 0 32 32" className="size-8">
      <rect x="1" y="1" width="30" height="30" rx="1.500" fill="#333b48" />
      <path d="M8 31Q4 18 10 13q6-5 13-1 6 4 4 10-3 6-9 4-4.500-2-2.500-6 2-2.500 4.500-1" fill="none" stroke="#ea2a55" strokeWidth="5" />
      <path d="M8 29Q5 18 11 13q6-4 12 0" fill="none" stroke="#ff7a93" strokeWidth="1.200" />
      <rect x="1" y="1" width="12" height="10" fill="#f3f3f3" />
      <text x="7" y="9" fontSize="8" fontWeight="700" textAnchor="middle" fill="#222" fontFamily="Liberation Mono">64</text>
    </svg>
  ),
  help: (
    <svg viewBox="0 0 32 32" className="size-8">
      <path d="M11 1a10 10 0 0 1 4 19L7 19l-6 3 2-5A10 10 0 0 1 11 1z" fill="#2fb0e8" />
      <path d="M20 10a10.500 10.500 0 0 1 9.500 15l1.500 6-6-1.500A10.500 10.500 0 1 1 20 10z" fill="#0e62ac" />
      <text x="20" y="26" fontSize="15" fontWeight="700" textAnchor="middle" fill="#fff" fontFamily="Open Sans">?</text>
    </svg>
  ),
  chrome: (
    <svg viewBox="0 0 32 32" className="size-8">
      <circle cx="16" cy="16" r="15" fill="#fbc116" />
      <path d="M16 16L3 8.500A15 15 0 0 1 29 8.500H16z" fill="#e33b2e" />
      <path d="M3 8.500A15 15 0 0 0 15.500 31L22.500 19.500 16 16 9.500 19.500z" fill="#2da94f" />
      <circle cx="16" cy="16" r="7.500" fill="#fff" />
      <circle cx="16" cy="16" r="5.900" fill="#2f7bef" />
    </svg>
  ),
  term: (
    <svg viewBox="0 0 32 32" className="size-8">
      <rect x="1" y="5" width="30" height="22.500" rx="1.500" fill="#383838" />
      <path d="M1 6.500Q1 5 2.500 5H12v4H1z" fill="#b5b5b5" />
      <path d="M12 5h9v4h-9z" fill="#8c8c8c" />
      <path d="M21 5h8.500Q31 5 31 6.500V9H21z" fill="#666" />
      <path d="M5.500 12.500l5.500 5.500-5.500 5.500" fill="none" stroke="#d0d0d0" strokeWidth="2.800" />
      <path d="M14 22.500h10" stroke="#fff" strokeWidth="3" />
    </svg>
  ),
  bird: (
    <svg viewBox="0 0 32 32" className="size-8">
      <path d="M11 6q1-5 8-5 5 0 8 2-2 .5-3 2 7 3 7 11Q30 30 16 31 3 30 1 17q0-7 3.500-11-.5 4 2 6 0-4 4.500-6z" fill="#1a74dc" />
      <path d="M1.500 12q1 14 13 18Q2 27 1 17z" fill="#45b5f5" />
      <path d="M13 4q4-3.500 10-2.500 3 .5 4 1.500-2 .5-3 2z" fill="#7f62d8" />
      <ellipse cx="16" cy="18" rx="7" ry="6" fill="#d9ecfb" />
      <path d="M10 14.500l6 5 6-5" fill="none" stroke="#7ab5ea" strokeWidth="1.500" />
    </svg>
  ),
  disk: (
    <svg viewBox="0 0 32 32" className="size-8">
      <path d="M2 2h25l3 3v25H2z" fill="#1738b8" />
      <rect x="9" y="2" width="16" height="9.500" fill="#c9cbd1" />
      <rect x="17.500" y="3" width="5" height="7.500" fill="#1738b8" />
      <rect x="5" y="15" width="22" height="14.500" fill="#fff" />
      <path d="M7 17.500h18M7 20.500h18M7 23.500h9M7 26.500h9" stroke="#f0a5a5" strokeWidth="1.200" />
      <text x="20.500" y="28" fontSize="8" fontWeight="700" textAnchor="middle" fill="#222" fontFamily="Liberation Mono">64</text>
    </svg>
  ),
};

const apps: { id: keyof typeof AppIcon; state: "none" | "open" | "active" }[] = [
  { id: "view", state: "none" },
  { id: "folder", state: "open" },
  { id: "edge", state: "active" },
  { id: "outlook", state: "open" },
  { id: "store", state: "none" },
  { id: "shield", state: "open" },
  { id: "panel", state: "open" },
  { id: "vbox", state: "open" },
  { id: "swirl", state: "open" },
  { id: "help", state: "open" },
  { id: "chrome", state: "open" },
  { id: "term", state: "open" },
  { id: "bird", state: "open" },
  { id: "disk", state: "open" },
];

function Taskbar() {
  return (
    <footer className={`${SYS} flex h-[60px] items-center border-t border-[#b9bab9] bg-[#eeeeee] text-[15px] leading-5 text-[#1b1b1b]`}>
      <div className="flex w-[373px] shrink-0 items-center">
        <svg viewBox="0 0 32 22" className="-mt-1 ml-[25px] h-[22px] w-8">
          <defs>
            <linearGradient id="wx" x1="0" y1="0" x2="0" y2="1">
              <stop offset="0" stopColor="#7fa5e6" />
              <stop offset="1" stopColor="#cbdcf6" />
            </linearGradient>
          </defs>
          <path d="M7 20.500a6 6 0 0 1-.5-12q2-6.500 8.500-6.700 7 0 8.800 5.500a6.700 6.700 0 0 1 .2 13.200z" fill="url(#wx)" stroke="#7c9fe0" strokeWidth=".8" />
          <path d="M17 12q2-5 7-4.700" fill="none" stroke="#6b92db" />
          <path d="M6.500 8.500q5-.5 7 4" fill="none" stroke="#8fb0ea" />
        </svg>
        <div className="-mt-1 ml-[7px] tracking-[-0.5px]">
          <div>0°C</div>
          <div className="text-[#616161]">Pochmurnie</div>
        </div>
      </div>
      <svg viewBox="0 0 29 29" className="size-[29px] shrink-0">
        <defs>
          <linearGradient id="win" x1="0" y1="0" x2="1" y2="1">
            <stop offset="0" stopColor="#4fd3fd" />
            <stop offset="1" stopColor="#0072d2" />
          </linearGradient>
        </defs>
        <path d="M1 0h13v14H0V1Q0 0 1 0zM15 0h13q1 0 1 1v13H15zM0 15h14v14H1q-1 0-1-1zM15 15h14v13q0 1-1 1H15z" fill="url(#win)" />
      </svg>
      <div className="ml-[17px] flex h-[39px] w-[274px] shrink-0 items-center rounded-full border border-[#d9d9d9] border-b-[#c4c4c4] bg-[#fbfbfb]">
        <svg viewBox="0 0 20 20" className="ml-[13px] size-5" fill="none" stroke="#2b2b2b" strokeWidth="2" strokeLinecap="round">
          <circle cx="8.500" cy="8.500" r="7" />
          <path d="M13.700 13.700l5 5" />
        </svg>
        <span className="ml-[11px] text-[17px] tracking-[-0.3px] text-[#5e5e5e]">Wyszukaj</span>
      </div>
      <div className="-mt-px ml-[3px] flex shrink-0">
        {apps.map((a) => (
          <div key={a.id} className="flex h-12 w-[55px] justify-center">
            <div
              className={
                a.state === "active"
                  ? "relative flex w-12 justify-center rounded-[5px] border border-[#e3e3e3] bg-[#f8f8f8] pt-[7px]"
                  : "relative flex w-12 justify-center pt-2"
              }
            >
              {AppIcon[a.id]}
              {a.state === "open" && <span className="absolute bottom-0 h-1 w-2 rounded-full bg-[#868686]" />}
              {a.state === "active" && <span className="absolute bottom-0 h-1 w-5 rounded-full bg-[#0b78d4]" />}
            </div>
          </div>
        ))}
      </div>
      <svg viewBox="0 0 14 8" className="-mt-px ml-[85px] h-2 w-[14px] shrink-0" fill="none" stroke="#1b1b1b" strokeWidth="1.600">
        <path d="M.8 7.200L7 1l6.200 6.200" />
      </svg>
      <svg viewBox="0 0 22 16" className="-mt-[3px] ml-[22px] h-4 w-[22px] shrink-0">
        <path d="M6 14.800a5 5 0 0 1-1.200-9.300q2-4.500 6.500-4.500 4.500.2 6 4.200 4 .8 4 5-.5 4-4 4.600z" fill="#b5b5b5" stroke="#222" strokeWidth="1.200" />
        <path d="M5 5.500q4-1 6.500 2l6.500-2Q16 1 11.500 1 7 1 5 5.500z" fill="#6b6b6b" />
        <path d="M5.500 14l9.500-5.500 5 4-2.500 1.800z" fill="#ececec" />
      </svg>
      <svg viewBox="0 0 20 17" className="-mt-[3px] ml-[19px] h-[17px] w-5 shrink-0" fill="#000">
        <path d="M5.500 0L10 3 5.500 6 1 3zM14.500 0L19 3l-4.500 3L10 3zM5.500 6.200L10 9.200l-4.500 3L1 9.200zM14.500 6.200l4.500 3-4.500 3-4.500-3zM10 10.800l4.500 3L10 16.800l-4.500-3z" />
      </svg>
      <span className="-mt-px ml-[25px] w-[27px] shrink-0 text-[14px] tracking-[-0.1px]">POL</span>
      <svg viewBox="0 0 22 22" className="-mt-[2px] ml-[23px] size-[22px] shrink-0" fill="none" stroke="#1b1b1b" strokeWidth="1.300">
        <path d="M13 2H3Q1.200 2 1.200 3.800v10.400Q1.200 16 3 16h12M7 16v4M12 16v4M5 20.300h9M14.500 1.200h5.500v5q0 1.500-1.500 1.500h-2.500q-1.500 0-1.500-1.500zM17.300 7.700V20.500M14.500 4h5.500" />
      </svg>
      <svg viewBox="0 0 22 18" className="-mt-px ml-2 h-[18px] w-[22px] shrink-0" fill="none" stroke="#1b1b1b" strokeWidth="1.300" strokeLinecap="round" strokeLinejoin="round">
        <path d="M1.500 6.300v5.400h3.300L9.500 16V2L4.800 6.300zM12 6q1.800 3 0 6" />
        <path d="M14.500 3.800q3.500 5.200 0 10.400M17.300 1.800q5.200 7.200 0 14.400" stroke="#bdbdbd" />
      </svg>
      <svg viewBox="0 0 22 18" className="-mt-[3px] ml-2 h-[18px] w-[22px] shrink-0">
        <path d="M7 4.200h10.500q1.500 0 1.500 1.500v8.600q0 1.500-1.500 1.500h-13Q3 15.800 3 14.300V11" fill="none" stroke="#1b1b1b" strokeWidth="1.300" />
        <path d="M8 6h9.300v8H4.800l3-3z" fill="#111" />
        <path d="M20 7.500h1.500v5H20zM4.500 0L1.500 6h2.700L2.500 11.500 8 4.500H5.300L6.500 0z" fill="#111" />
      </svg>
      <div className="-mt-1 mr-6 ml-auto shrink-0 text-right tracking-[-0.4px]">
        <div>07:09</div>
        <div>11.01.2025</div>
      </div>
    </footer>
  );
}

export default function App() {
  return (
    <div className={`${UI} flex h-[1080px] w-[1920px] flex-col overflow-hidden bg-[#56575b]`}>
      <div className={SYS}>
        <TabStrip />
        <Toolbar />
      </div>
      <div className="mx-[5px] mb-1 flex h-[923px] shrink-0 overflow-hidden rounded-[10px] bg-white">
        <div className="flex w-[1895px] flex-col">
          <header className="relative z-10 flex h-[100px] shrink-0 items-center bg-white shadow-[0_0_20px_rgba(0,62,155,0.18)]">
            <Emblem className="ml-[50px] h-[60px] w-[51px]" />
            <span className="mt-[2px] ml-[15px] text-[30px] font-bold text-black">mObywatel</span>
            <div className="ml-auto flex h-full w-[288px] items-center border-l border-[#dcdfe4] pl-[49px] text-[#0052a5]">
              <div>
                <div className="text-[20px] leading-[23px] font-bold">Ryszard Czekaj</div>
                <div className="text-[17.500px] leading-[23px]">Profil obywatela</div>
              </div>
              <svg viewBox="0 0 18 11" className="-mt-[13px] ml-[21px] h-[11px] w-[18px]" fill="none" stroke="#0052a5" strokeWidth="2" strokeLinecap="round" strokeLinejoin="round">
                <path d="M1 1l8 8.500L17 1" />
              </svg>
            </div>
          </header>
          <div className="flex h-[823px]">
            <Sidebar />
            <Content />
          </div>
        </div>
        <div className="w-[15px] bg-[#d7e1ec] pt-[230px]">
          <div className="h-[496px] rounded-full bg-[#5a8dc7]" />
        </div>
      </div>
      <Taskbar />
    </div>
  );
}
